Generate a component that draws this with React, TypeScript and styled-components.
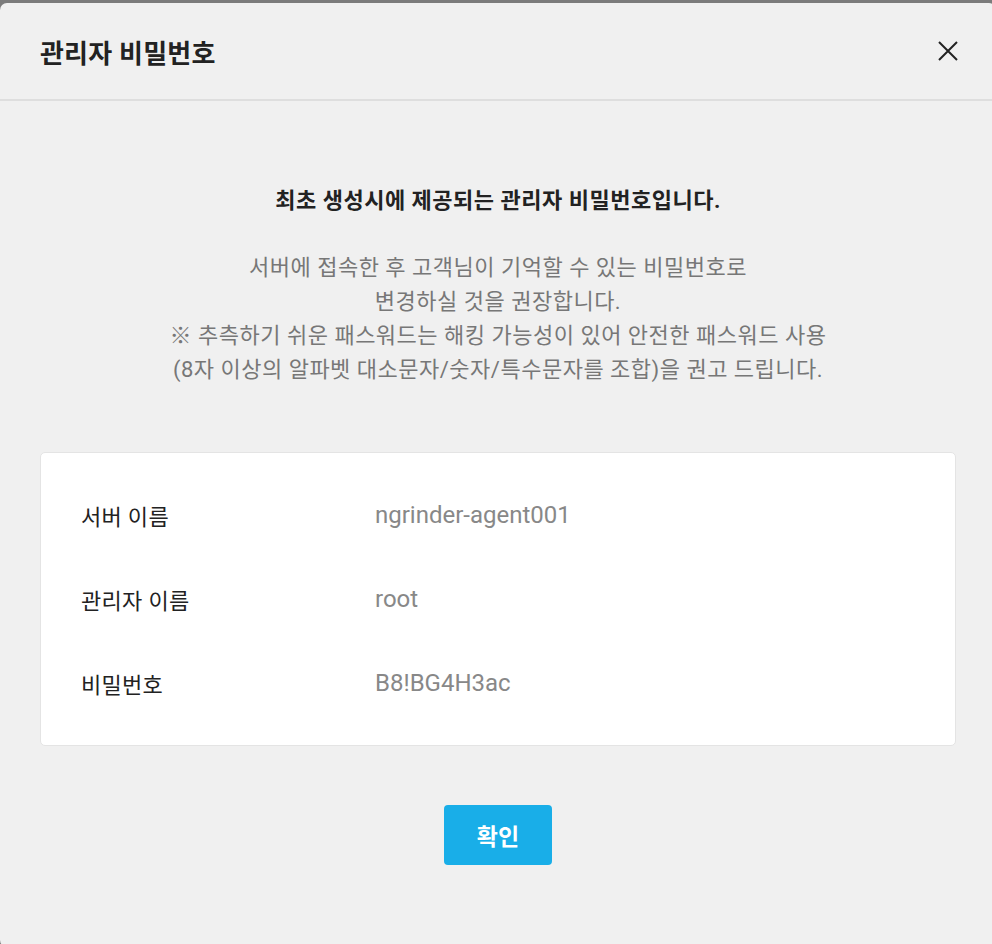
import React from "react";
import styled, { createGlobalStyle } from "styled-components";

const GlobalStyle = createGlobalStyle`
  html, body {
    margin: 0;
    padding: 0;
    overflow: hidden;
    background: #7b7b7b;
  }
  body {
    font-family: Roboto, "Noto Sans CJK KR", "Noto Sans", sans-serif;
  }
`;

const Modal = styled.div`
  margin-top: 3px;
  width: 996px;
  height: 944px;
  background: #f0f0f0;
  border-radius: 7px;
  overflow: hidden;
  display: flex;
  flex-direction: column;
`;

const Header = styled.header`
  height: 96px;
  border-bottom: 2px solid #dedede;
  display: flex;
  align-items: center;
  justify-content: space-between;
  padding: 0 37px 0 40px;
  box-sizing: content-box;
`;

const Title = styled.h1`
  margin: 0;
  font-size: 26px;
  font-weight: 700;
  letter-spacing: 0.2px;
  color: #222;
  font-family: Roboto, "Noto Sans CJK KR", sans-serif;
`;

const CloseButton = styled.button`
  border: 0;
  background: transparent;
  padding: 0;
  width: 22px;
  height: 22px;
  display: flex;
  align-items: center;
  justify-content: center;
  cursor: pointer;
`;

const Body = styled.main`
  padding: 84px 40px 0;
  display: flex;
  flex-direction: column;
  align-items: center;
`;

const Lead = styled.p`
  margin: 0;
  font-size: 22px;
  line-height: 32px;
  font-weight: 700;
  letter-spacing: 0.5px;
  color: #222;
  text-align: center;
`;

const Notice = styled.p`
  margin: 34px 0 0;
  font-size: 22px;
  line-height: 34px;
  letter-spacing: 0.5px;
  color: #777;
  text-align: center;
`;

const Card = styled.section`
  margin-top: 65px;
  align-self: stretch;
  background: #fff;
  border: 1px solid #e4e4e4;
  border-radius: 5px;
  padding: 20px 40px;
  display: flex;
  flex-direction: column;
`;

const Row = styled.div`
  height: 84px;
  display: grid;
  grid-template-columns: 294px 1fr;
  align-items: center;
`;

const Label = styled.span`
  font-size: 22px;
  letter-spacing: 0.3px;
  color: #222;
`;

const Value = styled.span`
  font-size: 24px;
  color: #888;
`;

const Confirm = styled.button`
  margin-top: 59px;
  width: 108px;
  height: 60px;
  border: 0;
  border-radius: 4px;
  background: #19aee8;
  color: #fff;
  font-family: Roboto, "Noto Sans CJK KR", sans-serif;
  font-size: 23px;
  font-weight: 700;
  cursor: pointer;
`;

const rows = [
  { label: "서버 이름", value: "ngrinder-agent001" },
  { label: "관리자 이름", value: "root" },
  { label: "비밀번호", value: "B8!BG4H3ac" },
];

export default function App() {
  return (
    <>
      <GlobalStyle />
      <Modal>
        <Header>
          <Title>관리자 비밀번호</Title>
          <CloseButton aria-label="닫기">
            <svg width="20" height="20" viewBox="0 0 20 20">
              <path d="M1 1 L19 19 M19 1 L1 19" stroke="#222" strokeWidth="2" fill="none" />
            </svg>
          </CloseButton>
        </Header>
        <Body>
          <Lead>최초 생성시에 제공되는 관리자 비밀번호입니다.</Lead>
          <Notice>
            서버에 접속한 후 고객님이 기억할 수 있는 비밀번호로
            <br />
            변경하실 것을 권장합니다.
            <br />
            ※ 추측하기 쉬운 패스워드는 해킹 가능성이 있어 안전한 패스워드 사용
            <br />
            (8자 이상의 알파벳 대소문자/숫자/특수문자를 조합)을 권고 드립니다.
          </Notice>
          <Card>
            {rows.map((r) => (
              <Row key={r.label}>
                <Label>{r.label}</Label>
                <Value>{r.value}</Value>
              </Row>
            ))}
          </Card>
          <Confirm>확인</Confirm>
        </Body>
      </Modal>
    </>
  );
}
